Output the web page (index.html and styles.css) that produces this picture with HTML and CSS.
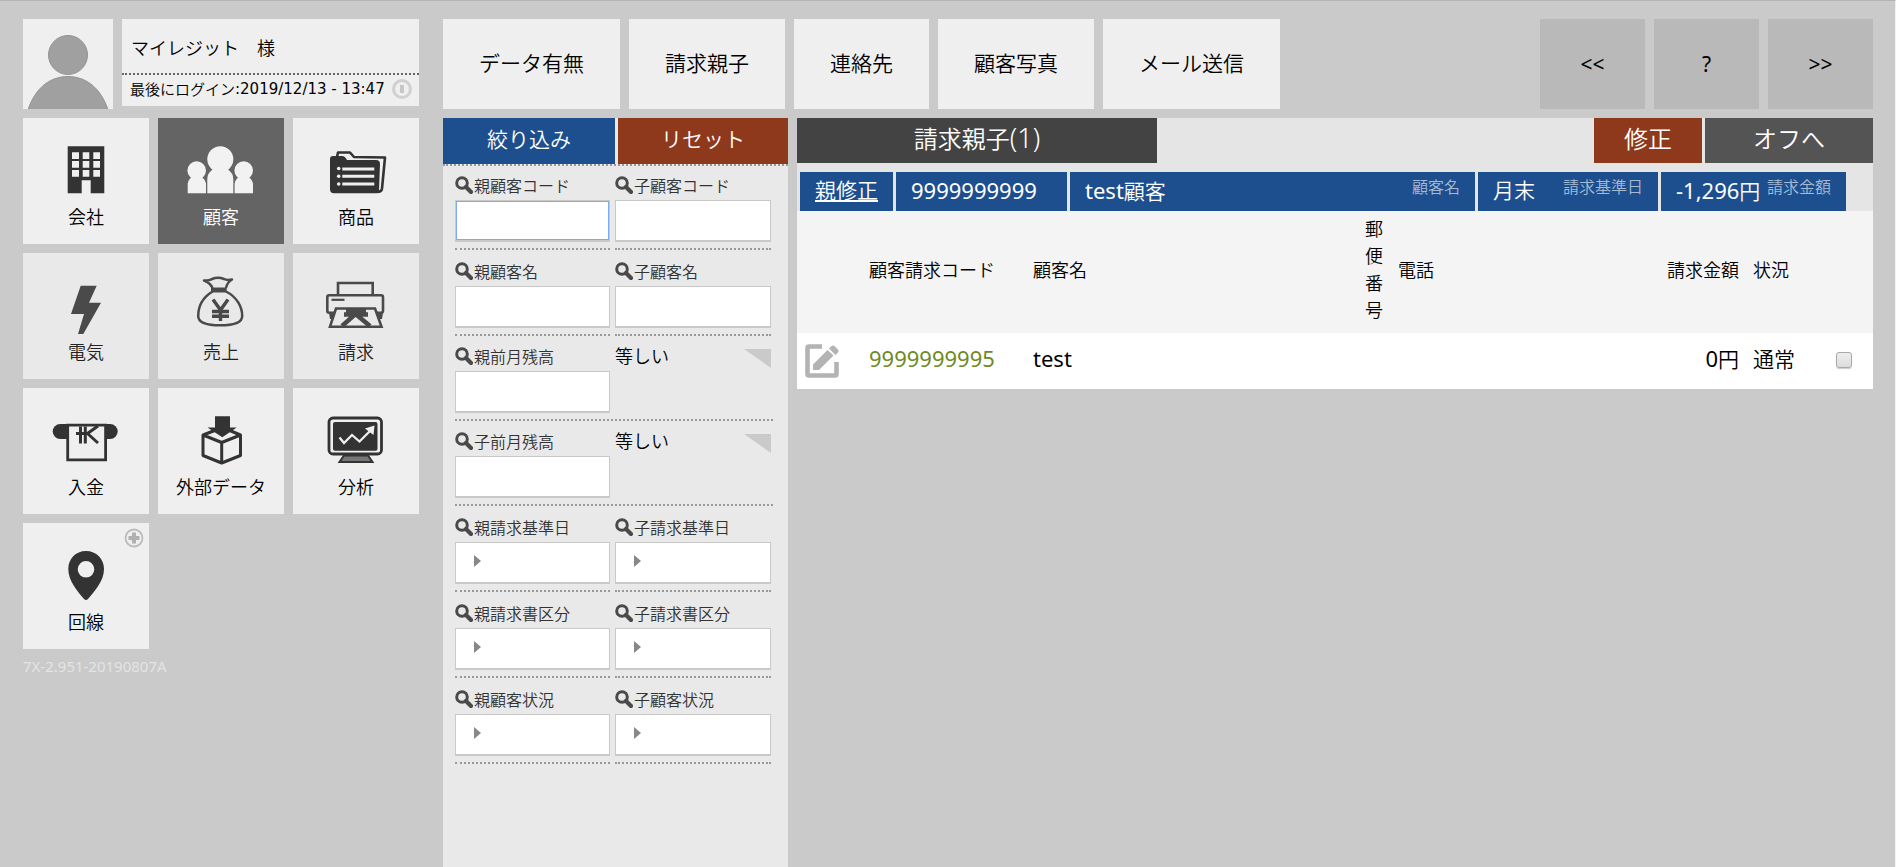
FILE: index.html
```html
<!DOCTYPE html>
<html lang="ja">
<head>
<meta charset="utf-8">
<title>請求親子</title>
<link rel="stylesheet" href="styles.css">
</head>
<body>
<svg class="defs" width="0" height="0" aria-hidden="true">
  <symbol id="search" viewBox="0 0 18 18"><circle cx="7" cy="7" r="5.3" fill="none" stroke="#4a4a4a" stroke-width="3"/><path d="M11 11l5 5" stroke="#4a4a4a" stroke-width="4.2" stroke-linecap="round"/></symbol>
</svg>
<div class="app">
  <aside class="sidebar">
    <div class="user">
      <svg class="avatar" viewBox="0 0 90 90" aria-hidden="true"><g fill="#a0a0a0" stroke="#949494"><circle cx="45" cy="36" r="19.5"/><path d="M5 91C12 69 27 57.500 45 57.500S78 69 85 91z"/></g></svg>
      <div class="user-box">
        <p class="user-name">マイレジット　様</p>
        <p class="login">最後にログイン<span class="login-time">:2019/12/13 - 13:47</span>
          <svg class="power" viewBox="0 0 20 20" aria-hidden="true"><circle cx="10" cy="10" r="8.500" fill="none" stroke="#d0d0d0" stroke-width="3"/><path d="M10 6v8" stroke="#c6c6c6" stroke-width="4"/></svg>
        </p>
      </div>
    </div>
    <nav class="tiles">
      <a class="tile" href="#"><svg viewBox="27 20 72 62"><path fill="#333" fill-rule="evenodd" d="M44.700 28.300h36.600v47H67.700v-13h-9v13h-14zM49 34.300v6.700h7v-6.700zm10.700 0v6.700h6.600v-6.700zm10.600 0v6.700H77v-6.700zM49 43v6.700h7V43zm10.700 0v6.700h6.600V43zm10.600 0v6.700H77V43zM49 52v6.700h7V52zm10.700 0v6.700h6.600V52zm10.600 0v6.700H77V52z"/></svg>会社</a>
      <a class="tile active" href="#"><svg viewBox="27 20 72 62"><g fill="#f2f2f2"><circle cx="62.300" cy="41.300" r="13"/><path d="M49.300 75.300V61q0-6 6-10h14q6 4 6 10v14.300z"/><circle cx="38.700" cy="52.500" r="9.300"/><path d="M29.700 75.300V67q0-5 4-8h10q4.300 3 4.300 8v8.300z"/><circle cx="85.700" cy="52.500" r="9.300"/><path d="M76.600 75.300V67q0-5 4-8h10q4.400 3 4.400 8v8.300z"/></g></svg>顧客</a>
      <a class="tile" href="#"><svg viewBox="27 20 72 62"><path d="M44 39l1-4.500h12l4 4.500 31 .5-3 31q-.5 3.500-5 3.500" fill="none" stroke="#333" stroke-width="2.600" stroke-linejoin="round"/><path d="M37 41q0-3 3-3h9q3 0 5 4h29q4 0 4 4l-1 26q0 3.300-3 3.300H41q-4 0-4-4z" fill="#333"/><path d="M49.300 51h32M49.300 58.300h32M49.300 66h32" stroke="#efefef" stroke-width="3"/><g fill="#efefef"><circle cx="45.700" cy="50.500" r="1.800"/><circle cx="45.700" cy="58.300" r="1.800"/><circle cx="45.700" cy="66" r="1.800"/></g></svg>商品</a>

      <a class="tile dim" href="#"><svg viewBox="27 20 72 62"><path fill="#4a4a4a" d="M57.700 32.700h16L66 49.700h12L60.300 81H55l6-20H48z"/></svg>電気</a>
      <a class="tile dim" href="#"><svg viewBox="27 20 72 62"><g fill="none" stroke="#4a4a4a" stroke-width="2.500" stroke-linejoin="round"><path d="M54.500 38.500C44 45 40.200 54 40.200 63q0 9.300 22 9.300t22-9.300C84.200 54 79 44 68 38.500"/><path d="M54.500 35q-2-5-8.500-7.500 6 0 8-1.500 6-2.500 12 0 3 1.500 8 .5-5 3-6 8.500"/></g><path fill="#4a4a4a" d="M53 34.500h15.700v5H53z"/><path d="M55 46.500l7.500 10.500L70 46.500M62.500 56v12M54 58.500h17M54 63.300h17" fill="none" stroke="#4a4a4a" stroke-width="3.400"/></svg>売上</a>
      <a class="tile dim" href="#"><svg viewBox="27 20 72 62"><g fill="none" stroke="#4a4a4a" stroke-width="2.600"><path d="M45 41V30h34.700v11"/><rect x="34.300" y="42.300" width="55.700" height="17.500" rx="2"/><path d="M38.500 46.800h13" stroke-width="2.200"/></g><path fill="#4a4a4a" d="M36 60h8v6h-7zM82 60h8l-1 6h-6z"/><path fill="#e9e9e9" stroke="#4a4a4a" stroke-width="2.600" d="M43 55.500h39l6.500 18.200H37z"/><path d="M53 57.500h20M51 61.500h24M62.500 57v6M62.500 61L49 73M62.500 61L77 73" fill="none" stroke="#4a4a4a" stroke-width="4.400"/></svg>請求</a>

      <a class="tile" href="#"><svg viewBox="27 20 72 62"><rect x="29.700" y="36" width="65" height="15" rx="7.500" fill="#333"/><path fill="#efefef" stroke="#333" stroke-width="2.800" d="M44.700 37.200h37.900v34.700H44.700z"/><path d="M75 38L64.500 45.500 75 55M65 45.500H53M57.500 38.500v17M62.300 38.500v17" fill="none" stroke="#333" stroke-width="3"/></svg>入金</a>
      <a class="tile" href="#"><svg viewBox="27 20 72 62"><path d="M45 47l18.700 7.500L82.500 47v20.500L63.700 75 45 67.500zM45 47l13-5M82.500 47l-12-5M63.700 54.500V75" fill="none" stroke="#333" stroke-width="3" stroke-linejoin="round"/><path fill="#333" d="M57 28.300h15v11.200h6.700L64.300 49.300 49.500 39.500H57z"/></svg>外部データ</a>
      <a class="tile" href="#"><svg viewBox="27 20 72 62"><rect x="36" y="30" width="52.500" height="36" rx="4" fill="none" stroke="#333" stroke-width="2.800"/><rect x="40" y="34" width="44.500" height="28.700" rx="2" fill="#333"/><path d="M46.500 49.500l4.500 5.500 8-8 7.500 6.500L78 42" fill="none" stroke="#efefef" stroke-width="2.300"/><path fill="#efefef" d="M72 40.500l9.500-3-1 9.500z"/><path fill="#777" stroke="#333" stroke-width="2" d="M51 67.500h24l4.500 6.500h-33z"/></svg>分析</a>

      <a class="tile" href="#"><svg viewBox="27 20 72 62"><path fill="#333" fill-rule="evenodd" d="M63 28c10.500 0 18 8 18 18 0 12-9.500 22-16 30q-2 2-4 0C54.500 68 45.300 58 45.300 46c0-10 7.200-18 17.700-18zm0 10a8.300 8.300 0 1 0 0 16.600 8.300 8.300 0 0 0 0-16.600z"/></svg>回線
        <svg class="plus" viewBox="0 0 20 20"><circle cx="10" cy="10" r="8.500" fill="none" stroke="#bcbcbc" stroke-width="1.800"/><path d="M10 4.500v11M4.500 10h11" stroke="#b0b0b0" stroke-width="4"/></svg></a>
    </nav>
    <p class="version">7X-2.951-20190807A</p>
  </aside>

  <main class="main">
    <nav class="topbar">
      <a class="tab" href="#">データ有無</a>
      <a class="tab" href="#">請求親子</a>
      <a class="tab" href="#">連絡先</a>
      <a class="tab" href="#">顧客写真</a>
      <a class="tab" href="#">メール送信</a>
      <span class="spacer"></span>
      <button class="pager" type="button">&lt;&lt;</button>
      <button class="pager" type="button">?</button>
      <button class="pager" type="button">&gt;&gt;</button>
    </nav>

    <div class="content">
      <form class="filters">
        <div class="filter-actions">
          <button class="apply" type="button">絞り込み</button>
          <button class="reset" type="reset">リセット</button>
        </div>
        <div class="filter-list">
          <div class="pair">
            <div class="field"><label for="f1"><svg><use href="#search"/></svg>親顧客コード</label><input class="focus" id="f1" type="text"></div>
            <div class="field"><label for="f2"><svg><use href="#search"/></svg>子顧客コード</label><input id="f2" type="text"></div>
          </div>
          <div class="pair">
            <div class="field"><label for="f3"><svg><use href="#search"/></svg>親顧客名</label><input id="f3" type="text"></div>
            <div class="field"><label for="f4"><svg><use href="#search"/></svg>子顧客名</label><input id="f4" type="text"></div>
          </div>
          <div class="balance">
            <div class="field"><label for="f5"><svg><use href="#search"/></svg>親前月残高</label><input id="f5" type="text"></div>
            <div class="compare"><select aria-label="親前月残高の条件"><option>等しい</option></select></div>
          </div>
          <div class="balance">
            <div class="field"><label for="f6"><svg><use href="#search"/></svg>子前月残高</label><input id="f6" type="text"></div>
            <div class="compare"><select aria-label="子前月残高の条件"><option>等しい</option></select></div>
          </div>
          <div class="pair">
            <div class="field"><label for="f7"><svg><use href="#search"/></svg>親請求基準日</label><div class="picker"><select id="f7"><option></option></select></div></div>
            <div class="field"><label for="f8"><svg><use href="#search"/></svg>子請求基準日</label><div class="picker"><select id="f8"><option></option></select></div></div>
          </div>
          <div class="pair">
            <div class="field"><label for="f9"><svg><use href="#search"/></svg>親請求書区分</label><div class="picker"><select id="f9"><option></option></select></div></div>
            <div class="field"><label for="f10"><svg><use href="#search"/></svg>子請求書区分</label><div class="picker"><select id="f10"><option></option></select></div></div>
          </div>
          <div class="pair">
            <div class="field"><label for="f11"><svg><use href="#search"/></svg>親顧客状況</label><div class="picker"><select id="f11"><option></option></select></div></div>
            <div class="field"><label for="f12"><svg><use href="#search"/></svg>子顧客状況</label><div class="picker"><select id="f12"><option></option></select></div></div>
          </div>
        </div>
      </form>

      <section class="results">
        <header class="results-head">
          <h1>請求親子<span class="count">(1)</span></h1>
          <span class="spacer"></span>
          <button class="edit" type="button">修正</button>
          <button class="off" type="button">オフへ</button>
        </header>
        <div class="parent">
          <div class="cell"><a href="#">親修正</a></div>
          <div class="cell code"><span class="num">9999999999</span></div>
          <div class="cell name"><span><span class="num">test</span>顧客</span><small>顧客名</small></div>
          <div class="cell date"><span>月末</span><small>請求基準日</small></div>
          <div class="cell amount"><span><span class="num">-1,296</span>円</span><small>請求金額</small></div>
        </div>
        <table class="list">
          <colgroup><col class="c-icon"><col class="c-code"><col><col class="c-zip"><col class="c-tel"><col class="c-sum"><col class="c-state"><col class="c-check"></colgroup>
          <thead>
            <tr><th></th><th>顧客請求コード</th><th>顧客名</th><th>郵便番号</th><th>電話</th><th class="right">請求金額</th><th>状況</th><th></th></tr>
          </thead>
          <tbody>
            <tr>
              <td class="icon-cell"><a class="pencil" href="#" aria-label="編集"><svg viewBox="0 0 34 34"><path d="M17 2.500H4Q2.500 2.500 2.500 4v26q0 1.500 1.500 1.500h26q1.500 0 1.500-1.500V18" fill="none" stroke="#b3b3b3" stroke-width="4.600"/><path fill="#b3b3b3" d="M8 20.500L22.500 6l6 5.500L14 26H8zM24 4.500l2-2q2-2 4 0l2.500 2.500q2 2 0 4l-2 2z"/></svg></a></td>
              <td><a class="num link" href="#">9999999995</a></td>
              <td><span class="num">test</span></td><td></td><td></td>
              <td class="right"><span class="num">0</span>円</td><td>通常</td>
              <td class="check-cell"><input type="checkbox" aria-label="選択"></td>
            </tr>
          </tbody>
        </table>
      </section>
    </div>
  </main>
</div>
</body>
</html>
```
FILE: styles.css
```css
* { box-sizing: border-box; }
body {
  margin: 0;
  background: #cacaca;
  color: #000;
  font-family: "Noto Sans", "Noto Sans CJK JP", sans-serif;
  font-size: 18px;
  font-weight: 350;
}
p, h1 { margin: 0; }
a { color: inherit; text-decoration: none; }
button, input, select { font: inherit; color: inherit; border: 0; border-radius: 0; margin: 0; padding: 0; }
.defs { position: absolute; }
.spacer { flex: 1; }
.app {
  display: flex;
  gap: 24px;
  min-height: 100vh;
  padding: 18px 22px 0 23px;
  border-top: 1px solid #b4b4b4;
  border-right: 1px solid #f1f1f1;
}

/* sidebar */
.sidebar { flex: none; width: 396px; }
.user { display: flex; align-items: flex-start; gap: 9px; margin-bottom: 9px; }
.avatar { flex: none; width: 90px; height: 90px; background: #efefef; }
.user-box { flex: 1; background: #efefef; }
.user-name { padding: 16px 9px 11px; line-height: 27px; border-bottom: 2px dotted #666; }
.login { display: flex; align-items: center; padding: 0 7px 3px 8px; font-size: 15px; line-height: 28px; white-space: nowrap; }
.login-time { font-family: "DejaVu Sans", sans-serif; font-weight: 400; }
.power { flex: none; width: 20px; height: 20px; margin-left: auto; }
.tiles { display: grid; grid-template-columns: repeat(3, 126px); gap: 9px; }
.tile {
  position: relative;
  display: flex;
  flex-direction: column;
  align-items: center;
  height: 126px;
  padding-top: 20px;
  background: #efefef;
  line-height: 30px;
}
.tile > svg:first-child { width: 72px; height: 62px; margin-bottom: 2px; }
.tile.active { background: #646464; color: #fff; }
.tile.dim { background: #e9e9e9; color: #222; }
.tile .plus { position: absolute; top: 5px; right: 5px; width: 20px; height: 20px; }
.version { margin-top: 7px; color: #e4e4e4; font-size: 15px; font-weight: 400; line-height: 20px; }

/* top bar */
.main { flex: 1; min-width: 0; display: flex; flex-direction: column; gap: 9px; }
.topbar { display: flex; gap: 9px; font-size: 21px; line-height: 88px; white-space: nowrap; }
.tab { padding: 0 36px 2px; background: #efefef; }
.pager { width: 105px; background: #b9b9b9; font-weight: 400; }
.content { flex: 1; display: flex; align-items: flex-start; gap: 9px; }

/* filters */
.filters { flex: none; align-self: stretch; width: 345px; background: #e9e9e9; }
.filter-actions { display: flex; gap: 3px; border-bottom: 2px dotted #999; font-size: 21px; line-height: 42px; }
.filter-actions button { padding-bottom: 4px; color: #fff; }
.apply { width: 172px; background: #1d4f8e; }
.filter-actions .reset { flex: 1; background: #8e391c; }
.filter-list { padding: 0 15px 0 12px; }
.pair, .balance { display: flex; gap: 5px; }
.field { flex: 1; padding-top: 10px; }
.field:first-child { flex: none; width: 155px; }
.pair .field { padding-bottom: 6px; border-bottom: 2px dotted #999; }
.pair { padding-right: 2px; }
.pair:first-child .field { padding-top: 8px; }
.balance { padding-bottom: 6px; border-bottom: 2px dotted #999; }
.balance .field { padding-top: 9px; }
.field label { display: flex; align-items: center; gap: 1px; height: 22px; margin-bottom: 4px; color: #333; font-size: 16px; white-space: nowrap; }
.field label svg { width: 18px; height: 18px; }
.field input, .picker { display: block; width: 100%; height: 42px; background: #fff; border: 1px solid #c9c9c9; border-bottom-width: 2px; }
.field input { padding: 0 8px; }
.field input.focus { box-shadow: inset 0 0 0 1px #7cabf5; }
.picker { position: relative; }
.picker select { width: 100%; height: 100%; appearance: none; background: transparent; }
.picker::before {
  content: "";
  position: absolute;
  top: 12px;
  left: 18px;
  border: solid transparent;
  border-width: 6px 0 6px 7px;
  border-left-color: #888;
}
.compare { position: relative; flex: 1; padding: 6px 2px 0 0; }
.compare select { width: 100%; height: 27px; appearance: none; background: transparent; }
.compare::after {
  content: "";
  position: absolute;
  top: 13px;
  right: 2px;
  width: 27px;
  height: 19px;
  background: #cacaca;
  clip-path: polygon(0 0, 100% 0, 100% 100%);
  pointer-events: none;
}

/* results */
.results { flex: 1; min-width: 0; background: #e5e5e5; }
.results-head { display: flex; gap: 3px; color: #fff; font-size: 24px; line-height: 41px; }
.results-head h1 { width: 360px; height: 45px; background: #434343; font: inherit; text-align: center; }
.results-head .count { font-size: 27px; line-height: 36px; }
.results-head button { color: #fff; }
.results-head .edit { padding: 0 30px 4px; background: #8e391c; }
.results-head .off { padding: 0 48px 4px; background: #545454; }
.parent { display: flex; gap: 3px; padding: 9px 27px 0 3px; color: #fff; font-size: 21px; line-height: 37px; white-space: nowrap; }
.cell { display: flex; justify-content: space-between; height: 39px; padding: 0 15px; background: #1d4f8e; }
.cell a { text-decoration: underline; }
.cell small { color: #a5bad5; font-size: 16px; line-height: 31px; }
.cell.code { width: 171px; }
.cell.name { flex: 1; }
.cell.date { width: 180px; }
.cell.amount { width: 185px; }
.num { font-size: 22px; font-weight: 400; }
.list { width: 100%; table-layout: fixed; border-collapse: collapse; background: #fff; }
.list th { padding: 5px 7px 9px; background: #f4f4f4; font-weight: inherit; line-height: 27px; text-align: left; }
.list td { height: 56px; padding: 0 7px 4px; font-size: 21px; line-height: 27px; }
.list .right { text-align: right; }
.list .icon-cell { padding: 0 8px; }
.list .check-cell { padding: 0 7px 2px; }
.c-icon { width: 65px; }
.c-code { width: 164px; }
.c-zip { width: 33px; }
.c-tel { width: 260px; }
.c-sum { width: 95px; }
.c-state { width: 75px; }
.c-check { width: 52px; }
.pencil { display: flex; }
.pencil svg { width: 34px; height: 34px; }
.link { color: #6f8a1e; }
.list input {
  display: block;
  width: 16px;
  height: 16px;
  margin: 0 8px;
  appearance: none;
  border: 1px solid #a9a9a9;
  border-radius: 3px;
  background: linear-gradient(#eee, #dcdcdc);
  box-shadow: 0 1px 1px #ccc;
}
```
